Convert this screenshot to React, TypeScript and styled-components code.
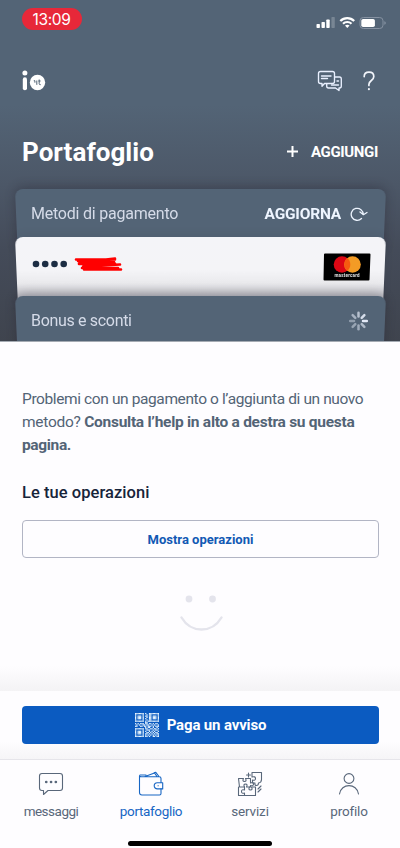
import React from "react";
import styled, { createGlobalStyle } from "styled-components";

const slate = "#536476";

const GlobalStyle = createGlobalStyle`
  * { box-sizing: border-box; }
  body { margin: 0; background: #fefdff; }
`;

const Screen = styled.main`
  width: 400px;
  height: 848px;
  display: flex;
  flex-direction: column;
  overflow: hidden;
  background: #fefdff;
  font-family: Roboto, "Noto Sans", sans-serif;
  color: ${slate};
`;

const Wallet = styled.section`
  height: 342px;
  flex: none;
  display: flex;
  flex-direction: column;
  overflow: hidden;
  color: #fff;
  border-bottom: 1px solid #a5abb3;
  background: linear-gradient(180deg, ${slate} 0, ${slate} 105px, #4c5767 185px, #444b59 250px, #3f444e 342px);
`;

const StatusBar = styled.div`
  height: 44px;
  flex: none;
  display: flex;
  justify-content: space-between;
  align-items: flex-start;
  padding: 8px 14px 0 22px;
`;

const Clock = styled.div`
  width: 60px;
  height: 22px;
  border-radius: 11px;
  background: #e72839;
  font: 400 15.5px/23px Inter, sans-serif;
  letter-spacing: -0.35px;
  text-align: center;
  padding-right: 1px;
`;

const StatusIcons = styled.svg`
  margin-top: 6px;
`;

const Toolbar = styled.header`
  height: 72px;
  flex: none;
  display: flex;
  align-items: center;
  justify-content: space-between;
  padding: 1px 25px 0 22px;
`;

const Actions = styled.div`
  display: flex;
  align-items: center;
  gap: 20px;
`;

const TitleRow = styled.div`
  height: 73px;
  flex: none;
  display: flex;
  align-items: center;
  justify-content: space-between;
  padding: 0 22px 1px;
`;

const Title = styled.h1`
  margin: 0;
  font-size: 26px;
  font-weight: 700;
  letter-spacing: 0.05px;
`;

const AddButton = styled.div`
  display: flex;
  align-items: center;
  gap: 12px;
  font-size: 15px;
  font-weight: 700;
  letter-spacing: -0.35px;
`;

const Card = styled.div<{ $height: number; $tone: "slate" | "light" }>`
  position: relative;
  z-index: 0;
  height: ${(p) => p.$height}px;
  flex: none;
  margin: 0 14px 0 15px;
  padding: ${(p) => (p.$tone === "slate" ? "1px 17px 0 16px" : "0 15px 0 16px")};
  display: flex;
  align-items: center;
  justify-content: space-between;
  &::before {
    content: "";
    position: absolute;
    z-index: -1;
    inset: 0 0 -20px;
    border-radius: 8px;
    transform-origin: top;
    transform: perspective(600px) rotateX(-8deg);
    background: ${(p) => (p.$tone === "slate" ? slate : "linear-gradient(#f4f4f8 0, #f4f4f7 34px, #e9e9ec 48px, #c5c5cc 62px)")};
    box-shadow: 0 -2px 12px rgba(35, 32, 45, ${(p) => (p.$tone === "slate" ? 0.38 : 0.1)});
  }
`;

const CardTitle = styled.span<{ $spacing: number }>`
  font-size: 16px;
  line-height: 20px;
  letter-spacing: ${(p) => p.$spacing}px;
  color: #d5dbe8;
`;

const Refresh = styled.div`
  display: flex;
  align-items: center;
  gap: 9px;
  font-size: 15.5px;
  font-weight: 700;
  letter-spacing: -0.2px;
  color: #eef5ff;
`;

const MaskedNumber = styled.svg`
  margin-bottom: 5px;
`;

const Body = styled.section`
  height: 349px;
  flex: none;
  padding: 46px 21px 0 22px;
  display: flex;
  flex-direction: column;
  background: linear-gradient(#fefdff 0, #fefdff 324px, #f4f3f5 349px);
`;

const Help = styled.p`
  margin: 0;
  font-size: 15.5px;
  line-height: 23px;
  white-space: nowrap;
`;

const Line = styled.span<{ $spacing: number }>`
  letter-spacing: ${(p) => p.$spacing}px;
`;

const Heading = styled.h2`
  margin: 25px 0 16px;
  font-size: 16.5px;
  line-height: 22px;
  font-weight: 500;
  letter-spacing: 0.05px;
  color: #17243a;
`;

const OutlineButton = styled.div`
  height: 38px;
  flex: none;
  border: 1px solid #b2b5c4;
  border-radius: 4px;
  display: flex;
  align-items: center;
  justify-content: center;
  font-size: 13px;
  font-weight: 700;
  color: #1259b4;
`;

const Smile = styled.svg`
  align-self: center;
  flex: none;
  margin-top: 34px;
`;

const PayBar = styled.div`
  height: 68px;
  flex: none;
  padding: 15px 21px 0 22px;
  background: linear-gradient(#fefdff 50px, #f6f5f7);
`;

const PayButton = styled.div`
  height: 38px;
  border-radius: 4px;
  display: flex;
  align-items: center;
  justify-content: center;
  gap: 8px;
  background: #0b5bc1;
  color: #fff;
  font-size: 15px;
  font-weight: 700;
  letter-spacing: -0.15px;
`;

const Tabs = styled.nav`
  height: 82px;
  flex: none;
  display: grid;
  grid-template-columns: 102px 98px 100px 98px;
  border-top: 1px solid #e6e5ea;
  padding-top: 10px;
`;

const Tab = styled.div<{ $active?: boolean; $spacing: number }>`
  display: flex;
  flex-direction: column;
  align-items: center;
  gap: 1px;
  font-size: 13.5px;
  line-height: 24px;
  letter-spacing: ${(p) => p.$spacing}px;
  color: ${(p) => (p.$active ? "#1766c4" : "#59677a")};
`;

const TabIcon = styled.svg`
  width: 28px;
  height: 28px;
  fill: none;
  stroke: currentColor;
  stroke-width: 1.1;
  stroke-linejoin: round;
  stroke-linecap: round;
`;

const HomeIndicator = styled.div`
  width: 144px;
  height: 5px;
  margin-left: 128px;
  flex: none;
  border-radius: 3px;
  background: #000;
`;

const qrRows = [
  "1111111010011111111",
  "1000001001011000001",
  "1011101011011011101",
  "1011101001011011101",
  "1011101010011011101",
  "1000001001011000001",
  "1111111010111111111",
  "0000000011000000000",
  "1010111011011010110",
  "0101001101100101001",
  "1100110110111010111",
  "0000000010110010010",
  "1111111011001101101",
  "1000001001110010110",
  "1011101010010101001",
  "1011101001101010110",
  "1011101011010101011",
  "1000001010101010101",
  "1111111011010011011",
];

const spokes = [0.65, 0.85, 0.95, 0.6, 0.5, 0.45, 0.4, 0.55];

export default function App() {
  return (
    <>
      <GlobalStyle />
      <Screen>
        <Wallet>
          <StatusBar>
            <Clock>13:09</Clock>
            <StatusIcons width="70" height="16" viewBox="0 0 70 16" fill="#fff">
              <rect x="0.5" y="10" width="3.4" height="4" rx="0.7" />
              <rect x="5.5" y="8" width="3.4" height="6" rx="0.7" />
              <rect x="10.3" y="5.5" width="3.4" height="8.5" rx="0.7" />
              <rect x="15.4" y="3" width="3.4" height="11" rx="0.7" opacity="0.22" />
              <g fill="none" stroke="#fff" strokeWidth="2.2">
                <path d="M24.3 7a10 10 0 0 1 13.900 0" />
                <path d="M27 9.700a6.200 6.200 0 0 1 8.500 0" />
              </g>
              <path d="M29 11.600a3.600 3.600 0 0 1 4.600 0L31.300 14z" />
              <rect x="44" y="3.500" width="23" height="11" rx="3.300" fill="none" stroke="#8591a1" strokeWidth="1" />
              <path d="M68.300 7.200v3.600c2-.5 2-3.100 0-3.600z" fill="#8591a1" />
              <rect x="45.300" y="4.900" width="13.600" height="8.200" rx="1.800" />
            </StatusIcons>
          </StatusBar>
          <Toolbar>
            <svg width="24" height="22" viewBox="0 0 24 22" fill="#fff">
              <circle cx="2.900" cy="3" r="2.500" />
              <rect x="0.800" y="7.300" width="4.200" height="13" rx="2.100" />
              <circle cx="15.500" cy="12.500" r="7.700" />
              <path d="M11.800 10.700h1.100v2M14.800 10.500v4.300M17.200 9.500v4.200q0 1.200 1.500 1M16.300 11h2.300" fill="none" stroke={slate} strokeWidth="1" />
            </svg>
            <Actions>
              <svg width="26" height="22" viewBox="0 0 26 22" fill="none" stroke="#e9f0ff" strokeWidth="1.350" strokeLinejoin="round" strokeLinecap="round">
                <path d="M3.500 1.500h12q2 0 2 2v8q0 2-2 2H7.500l-2.500 2.800V13.500H3.500q-2 0-2-2v-8q0-2 2-2z" />
                <path d="M4.500 6h9.500M4.500 8.500h6" />
                <path d="M18 7h4.500q1.800 0 1.800 2v7q0 2-1.800 2H22v2.500L18.500 18h-7Q9.700 18 9.700 16v-2M20 11h1.500M14.500 15h7" />
              </svg>
              <svg width="12" height="20" viewBox="0 0 12 20" fill="none" stroke="#f2f5fb" strokeWidth="1.700" strokeLinecap="round">
                <path d="M1.200 5.600Q1.200 1.200 6 1.200t4.800 4.300c0 4.300-4.900 3.700-4.900 8V14.500" />
                <path d="M5.900 18.100v.2" strokeWidth="2.100" />
              </svg>
            </Actions>
          </Toolbar>
          <TitleRow>
            <Title>Portafoglio</Title>
            <AddButton>
              <svg width="12" height="12" viewBox="0 0 12 12" stroke="#fff" strokeWidth="2">
                <path d="M0 5.500h11M5.500 0v11" />
              </svg>
              AGGIUNGI
            </AddButton>
          </TitleRow>
          <Card $height={48} $tone="slate">
            <CardTitle $spacing={-0.22}>Metodi di pagamento</CardTitle>
            <Refresh>
              AGGIORNA
              <svg width="19" height="16" viewBox="0 0 19 16" fill="none" stroke="#eef5ff" strokeWidth="1.300" strokeLinecap="round" strokeLinejoin="round">
                <path d="M11.500 12.500A6 6 0 1 1 13.200 8.500M10 6l3.400 2.700L17 6.500" />
              </svg>
            </Refresh>
          </Card>
          <Card $height={59} $tone="light">
            <MaskedNumber width="92" height="18" viewBox="0 0 92 18">
              <g fill="#1c2d43">
                <circle cx="5" cy="9" r="3.300" />
                <circle cx="14.200" cy="9" r="3.300" />
                <circle cx="23.500" cy="9" r="3.300" />
                <circle cx="32.700" cy="9" r="3.300" />
              </g>
              <path d="M45 4.500h30l9-1M47 6l37-1.500M48 8.500l35-1.500M48 9l36-.5M52 11.500l37-2M51 13h36M53 14.500h37" fill="none" stroke="#ff0000" strokeWidth="2.600" strokeLinecap="round" strokeLinejoin="round" />
            </MaskedNumber>
            <svg width="48" height="28" viewBox="0 0 48 28">
              <path d="M2 .5h44.500q1 0 1 1L46.500 26.500q0 1-1 1h-44q-1 0-1-1L1 1.500q0-1 1-1z" fill="#000" />
              <circle cx="19" cy="11.500" r="8.300" fill="#dc0714" />
              <circle cx="29.500" cy="11.500" r="8.300" fill="#f39b25" />
              <path d="M24.250 5.070a8.300 8.300 0 0 1 0 12.860a8.300 8.300 0 0 1 0-12.860z" fill="#f65a10" />
              <text x="11.500" y="23.500" textLength="25" fontSize="4.500" fontWeight="700" fill="#e8e8e8">mastercard</text>
            </svg>
          </Card>
          <Card $height={48} $tone="slate">
            <CardTitle $spacing={-0.32}>Bonus e sconti</CardTitle>
            <svg width="20" height="20" viewBox="-9.500 -10 20 20" stroke="#edf3ff" strokeWidth="2.500" strokeLinecap="round">
              {spokes.map((opacity, i) => (
                <path key={i} d="M0-4.500V-8.300" opacity={opacity} transform={`rotate(${i * 45})`} />
              ))}
            </svg>
          </Card>
        </Wallet>
        <Body>
          <Help>
            <Line $spacing={-0.39}>Problemi con un pagamento o l’aggiunta di un nuovo</Line>
            <br />
            <Line $spacing={-0.27}>
              metodo? <b>Consulta l’help in alto a destra su questa</b>
            </Line>
            <br />
            <Line $spacing={-0.35}>
              <b>pagina.</b>
            </Line>
          </Help>
          <Heading>Le tue operazioni</Heading>
          <OutlineButton>Mostra operazioni</OutlineButton>
          <Smile width="44" height="40" viewBox="0 0 44 40">
            <g fill="#e4e4ec">
              <circle cx="10" cy="7" r="3.400" />
              <circle cx="33.500" cy="7" r="3.400" />
            </g>
            <path d="M2.500 25.500C12 41.500 33 41.500 42.500 25.500" fill="none" stroke="#e4e4ec" strokeWidth="2.400" strokeLinecap="round" />
          </Smile>
        </Body>
        <PayBar>
          <PayButton>
            <svg width="24" height="24" viewBox="0 0 19 19" fill="#e8f5ff">
              {qrRows.flatMap((row, y) =>
                [...row].map((cell, x) => (cell === "1" ? <rect key={`${x}-${y}`} x={x} y={y} width="1" height="1" /> : null)),
              )}
            </svg>
            Paga un avviso
          </PayButton>
        </PayBar>
        <Tabs>
          <Tab $spacing={-0.5}>
            <TabIcon viewBox="0 0 28 28">
              <path d="M5 3.500h18q2.500 0 2.500 2.500v12q0 2.500-2.500 2.500H11L6.500 24.500v-4H5q-2.500 0-2.500-2.500V6q0-2.500 2.500-2.500z" />
              <path d="M9.200 12h.1M14 12h.1M18.800 12h.1" strokeWidth="2.600" />
            </TabIcon>
            messaggi
          </Tab>
          <Tab $active $spacing={-0.35}>
            <TabIcon viewBox="0 0 28 28">
              <path d="M24 12.500V8.500q0-1.700-1.700-1.700H4.500Q2.500 6.800 2.500 5.800M2.500 6v16.500q0 2.500 2.500 2.500h17.500q1.500 0 1.500-1.500v-4.800M8 6.500l9.500-3.500 2.500 3.500M17 2.800l1.800-.5L22 6.500M3 5h6" />
              <path d="M25.700 12.700h-5.400a3.100 3.100 0 0 0 0 6.200h5.400zM21 15.800h.3" />
            </TabIcon>
            portafoglio
          </Tab>
          <Tab $spacing={-0.15}>
            <TabIcon viewBox="0 0 28 28">
              <path d="M2.500 8.500h5q-1.500 3 1 3t1-3h5V13q3-1.500 3 1t-3 1.500v1.500h-4q1.500-3-1-3t-1 3h-5z" />
              <path d="M2.500 17v8.500h17V17h-4q1.500 3-1 3t-1-3M8.500 25.500v-2.500q-3 1-3-1.500t3-1.500v-3M16 4.500V2.500h9.500v7q0 3-3 3.500 0 2.500-2 2.500t-1.500-2.500h-2.500V10q3 1 3-1.500T16 7zM12.500 3v4M10.500 5h4M22 19l3-3M22 22l3-3" />
            </TabIcon>
            servizi
          </Tab>
          <Tab $spacing={-0.2}>
            <TabIcon viewBox="0 0 28 28">
              <circle cx="14" cy="8.500" r="4.900" />
              <path d="M4.500 24C6 12.800 22 12.800 23.500 24" />
            </TabIcon>
            profilo
          </Tab>
        </Tabs>
        <HomeIndicator />
      </Screen>
    </>
  );
}
